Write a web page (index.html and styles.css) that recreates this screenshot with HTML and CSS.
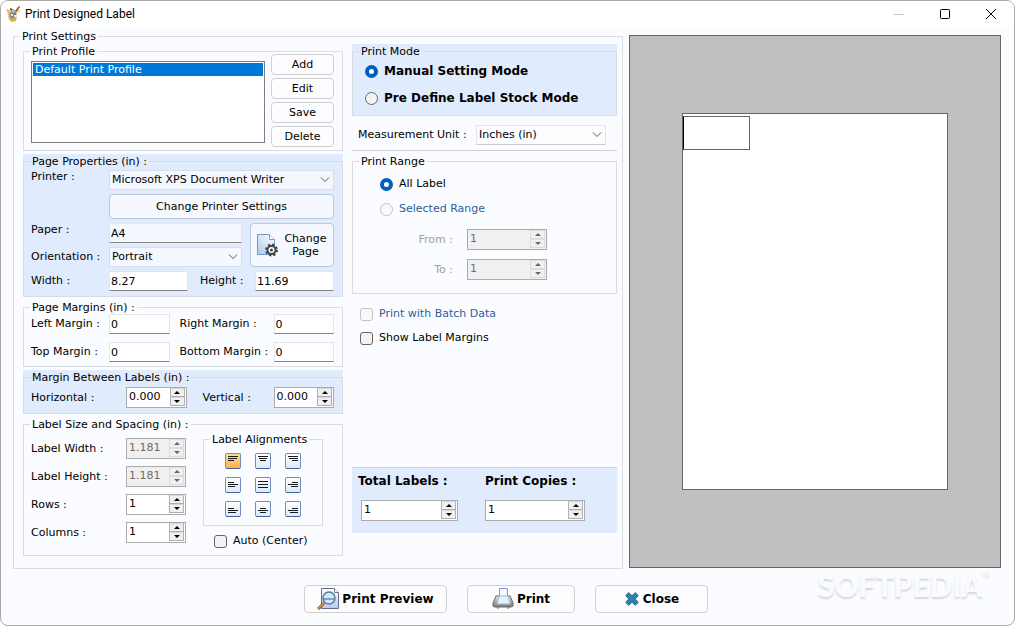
FILE: index.html
```html
<!DOCTYPE html>
<html lang="en">
<head>
    <meta charset="UTF-8">
    <meta name="viewport" content="width=device-width, initial-scale=1.0">
    <title>Print Designed Label</title>
    <link rel="stylesheet" href="styles.css">
</head>
<body>
    <div class="window">
        <header class="title-bar">
            <svg class="app-icon" width="16" height="16" viewBox="0 0 16 16">
                <path d="M3 5l9-1-1 9-7 1z" fill="#a9a9a4"/>
                <path d="M5 7l6-1v5l-5 1z" fill="#76808f"/>
                <path d="M1 3l4 1 1 3-3 1zM10 4l3-2 2 3-4 2z" fill="#efc252"/>
                <path d="M3 10l4 3 5-2-1 4-5 1z" fill="#e8ae3c"/>
                <path d="M5 2l3 1-1 2-2-1z" fill="#7b5a3a"/>
                <path d="M14 0l1 1-4 5-1-1z" fill="#8a4a35"/>
                <path d="M6 8h2v2H6zM9 9h2v2H9z" fill="#f4ead0"/>
                <path d="M8 3l2 1-1 3-2-1z" fill="#b9bfc9"/>
            </svg>
            <h1>Print Designed Label</h1>
            <div class="window-buttons">
                <button type="button" aria-label="Minimize" disabled>
                    <svg width="12" height="12" viewBox="0 0 12 12"><path d="M1 6.5h10" stroke="#c4c4c4"/></svg>
                </button>
                <button type="button" aria-label="Maximize">
                    <svg width="12" height="12" viewBox="0 0 12 12"><rect x="1.5" y="1.5" width="9" height="9" rx="1" fill="none" stroke="#000"/></svg>
                </button>
                <button type="button" aria-label="Close window">
                    <svg width="12" height="12" viewBox="0 0 12 12"><path d="M1 1l10 10M11 1L1 11" stroke="#000"/></svg>
                </button>
            </div>
        </header>

        <main class="content">
            <fieldset class="settings">
                <legend>Print Settings</legend>
                <div class="settings-columns">
                    <div class="column">
                        <div class="panel">
                            <fieldset>
                                <legend>Print Profile</legend>
                                <div class="profile">
                                    <select class="profile-list" size="4" aria-label="Print Profile">
                                        <option selected>Default Print Profile</option>
                                    </select>
                                    <div class="profile-buttons">
                                        <button type="button" class="btn">Add</button>
                                        <button type="button" class="btn">Edit</button>
                                        <button type="button" class="btn">Save</button>
                                        <button type="button" class="btn">Delete</button>
                                    </div>
                                </div>
                            </fieldset>
                        </div>

                        <div class="panel tinted">
                            <fieldset>
                                <legend>Page Properties (in) :</legend>
                                <div class="page-properties">
                                    <div class="row">
                                        <label class="label-high" for="printer">Printer :</label>
                                        <select id="printer" class="grow"><option>Microsoft XPS Document Writer</option></select>
                                    </div>
                                    <button type="button" class="btn printer-settings">Change Printer Settings</button>
                                    <div class="paper">
                                        <div class="paper-fields">
                                            <div class="row">
                                                <label class="label-high" for="paper">Paper :</label>
                                                <input type="text" id="paper" class="grow readonly" value="A4" readonly>
                                            </div>
                                            <div class="row">
                                                <label for="orientation">Orientation :</label>
                                                <select id="orientation" class="grow"><option>Portrait</option><option>Landscape</option></select>
                                            </div>
                                        </div>
                                        <button type="button" class="btn change-page">
                                            <svg width="22" height="24" viewBox="0 0 22 24">
                                                <defs>
                                                    <linearGradient id="sheet" x1="0" y1="1" x2="1" y2="0">
                                                        <stop offset="0" stop-color="#a9cbec"/>
                                                        <stop offset="1" stop-color="#ffffff"/>
                                                    </linearGradient>
                                                </defs>
                                                <path d="M.5 1.5h12l5 5v15H.5z" fill="url(#sheet)" stroke="#6f9cc4"/>
                                                <path d="M12.5 1.5v5h5" fill="#fff" stroke="#6f9cc4"/>
                                                <circle cx="14.5" cy="17" r="4" fill="#fff" stroke="#444" stroke-width="2"/>
                                                <circle cx="14.5" cy="17" r="5.5" fill="none" stroke="#444" stroke-width="2" stroke-dasharray="2.3 2.02"/>
                                                <circle cx="14.5" cy="17" r="1.5" fill="#444"/>
                                            </svg>
                                            <span>Change<br>Page</span>
                                        </button>
                                    </div>
                                    <div class="row">
                                        <label for="page-width">Width :</label>
                                        <input type="text" id="page-width" class="size-input" value="8.27">
                                        <label class="height-label" for="page-height">Height :</label>
                                        <input type="text" id="page-height" class="size-input" value="11.69">
                                    </div>
                                </div>
                            </fieldset>
                        </div>

                        <div class="panel">
                            <fieldset>
                                <legend>Page Margins (in) :</legend>
                                <div class="page-margins">
                                    <label for="margin-left">Left Margin :</label>
                                    <input type="text" id="margin-left" value="0">
                                    <label class="second" for="margin-right">Right Margin :</label>
                                    <input type="text" id="margin-right" value="0">
                                    <label for="margin-top">Top Margin :</label>
                                    <input type="text" id="margin-top" value="0">
                                    <label class="second" for="margin-bottom">Bottom Margin :</label>
                                    <input type="text" id="margin-bottom" value="0">
                                </div>
                            </fieldset>
                        </div>

                        <div class="panel tinted">
                            <fieldset>
                                <legend>Margin Between Labels (in) :</legend>
                                <div class="label-margins">
                                    <label for="horizontal">Horizontal :</label>
                                    <div class="spin">
                                        <input type="number" id="horizontal" value="0.000" step="0.001">
                                        <div class="spin-buttons"><button type="button" aria-label="Up"></button><button type="button" aria-label="Down"></button></div>
                                    </div>
                                    <label class="vertical-label" for="vertical">Vertical :</label>
                                    <div class="spin">
                                        <input type="number" id="vertical" value="0.000" step="0.001">
                                        <div class="spin-buttons"><button type="button" aria-label="Up"></button><button type="button" aria-label="Down"></button></div>
                                    </div>
                                </div>
                            </fieldset>
                        </div>

                        <div class="panel">
                            <fieldset>
                                <legend>Label Size and Spacing (in) :</legend>
                                <div class="label-size">
                                    <div class="label-fields">
                                        <label for="label-width">Label Width :</label>
                                        <div class="spin disabled">
                                            <input type="number" id="label-width" value="1.181" step="0.001" disabled>
                                            <div class="spin-buttons"><button type="button" aria-label="Up" disabled></button><button type="button" aria-label="Down" disabled></button></div>
                                        </div>
                                        <label for="label-height">Label Height :</label>
                                        <div class="spin disabled">
                                            <input type="number" id="label-height" value="1.181" step="0.001" disabled>
                                            <div class="spin-buttons"><button type="button" aria-label="Up" disabled></button><button type="button" aria-label="Down" disabled></button></div>
                                        </div>
                                        <label for="rows">Rows :</label>
                                        <div class="spin">
                                            <input type="number" id="rows" value="1">
                                            <div class="spin-buttons"><button type="button" aria-label="Up"></button><button type="button" aria-label="Down"></button></div>
                                        </div>
                                        <label for="columns">Columns :</label>
                                        <div class="spin">
                                            <input type="number" id="columns" value="1">
                                            <div class="spin-buttons"><button type="button" aria-label="Up"></button><button type="button" aria-label="Down"></button></div>
                                        </div>
                                    </div>
                                    <div class="alignments">
                                        <fieldset>
                                            <legend>Label Alignments</legend>
                                            <div class="align-grid">
                                                <button type="button" class="active" aria-label="Top left"><svg width="14" height="14"><path d="M2 2.5h10M2 4.5h9M2 6.5h6"/></svg></button>
                                                <button type="button" aria-label="Top center"><svg width="14" height="14"><path d="M2 2.5h10M3 4.5h8M4 6.5h6"/></svg></button>
                                                <button type="button" aria-label="Top right"><svg width="14" height="14"><path d="M2 2.5h10M3 4.5h9M6 6.5h6"/></svg></button>
                                                <button type="button" aria-label="Middle left"><svg width="14" height="14"><path d="M2 4.5h6M2 6.5h10M2 8.5h7"/></svg></button>
                                                <button type="button" aria-label="Middle center"><svg width="14" height="14"><path d="M2 3.5h10M2 6.5h10M2 9.5h10"/></svg></button>
                                                <button type="button" aria-label="Middle right"><svg width="14" height="14"><path d="M6 4.5h6M2 6.5h10M5 8.5h7"/></svg></button>
                                                <button type="button" aria-label="Bottom left"><svg width="14" height="14"><path d="M2 6.5h6M2 8.5h10M2 10.5h8"/></svg></button>
                                                <button type="button" aria-label="Bottom center"><svg width="14" height="14"><path d="M4 6.5h6M2 8.5h10M4 10.5h6"/></svg></button>
                                                <button type="button" aria-label="Bottom right"><svg width="14" height="14"><path d="M6 6.5h6M2 8.5h10M4 10.5h8"/></svg></button>
                                            </div>
                                        </fieldset>
                                        <label class="option auto-center"><input type="checkbox"> Auto (Center)</label>
                                    </div>
                                </div>
                            </fieldset>
                        </div>
                    </div>

                    <div class="column column-right">
                        <div class="panel tinted">
                            <fieldset>
                                <legend>Print Mode</legend>
                                <div class="print-mode">
                                    <label class="option"><input type="radio" name="mode" checked> Manual Setting Mode</label>
                                    <label class="option"><input type="radio" name="mode"> Pre Define Label Stock Mode</label>
                                </div>
                            </fieldset>
                        </div>

                        <div class="unit">
                            <label for="unit">Measurement Unit :</label>
                            <select id="unit"><option>Inches (in)</option></select>
                        </div>

                        <div class="panel">
                            <fieldset>
                                <legend>Print Range</legend>
                                <div class="print-range">
                                    <label class="option"><input type="radio" name="range" checked> All Label</label>
                                    <label class="option muted"><input type="radio" name="range" disabled> Selected Range</label>
                                    <div class="range-fields">
                                        <label for="from">From :</label>
                                        <div class="spin disabled">
                                            <input type="number" id="from" value="1" disabled>
                                            <div class="spin-buttons"><button type="button" aria-label="Up" disabled></button><button type="button" aria-label="Down" disabled></button></div>
                                        </div>
                                        <label for="to">To :</label>
                                        <div class="spin disabled">
                                            <input type="number" id="to" value="1" disabled>
                                            <div class="spin-buttons"><button type="button" aria-label="Up" disabled></button><button type="button" aria-label="Down" disabled></button></div>
                                        </div>
                                    </div>
                                </div>
                            </fieldset>
                        </div>

                        <div class="print-options">
                            <label class="option muted"><input type="checkbox" disabled> Print with Batch Data</label>
                            <label class="option"><input type="checkbox"> Show Label Margins</label>
                        </div>

                        <div class="totals">
                            <div class="total">
                                <label for="total-labels">Total Labels :</label>
                                <div class="spin total-spin">
                                    <input type="number" id="total-labels" value="1">
                                    <div class="spin-buttons"><button type="button" aria-label="Up"></button><button type="button" aria-label="Down"></button></div>
                                </div>
                            </div>
                            <div class="total">
                                <label for="copies">Print Copies :</label>
                                <div class="spin">
                                    <input type="number" id="copies" value="1">
                                    <div class="spin-buttons"><button type="button" aria-label="Up"></button><button type="button" aria-label="Down"></button></div>
                                </div>
                            </div>
                        </div>
                    </div>
                </div>
            </fieldset>

            <section class="preview">
                <div class="sheet">
                    <div class="sheet-label"></div>
                </div>
            </section>
        </main>

        <footer class="actions">
            <button type="button" class="btn action preview-btn">
                <svg width="22" height="22" viewBox="0 0 22 22">
                    <defs>
                        <linearGradient id="doc" x1="0" y1="0" x2="0" y2="1">
                            <stop offset="0" stop-color="#ffffff"/>
                            <stop offset="1" stop-color="#b9cbe8"/>
                        </linearGradient>
                    </defs>
                    <path d="M4.5 .5h13l4 4v16h-17z" fill="url(#doc)" stroke="#5f6f8c"/>
                    <path d="M17.5 .5v4h4" fill="#fff" stroke="#777"/>
                    <path d="M1 21l6-6" stroke="#8a5526" stroke-width="3"/>
                    <path d="M1 21l6-6" stroke="#d9954a" stroke-width="1.5"/>
                    <circle cx="12" cy="10" r="6" fill="#d5e8fa" stroke="#5b7aa0" stroke-width="1.5"/>
                    <path d="M7 10h10v2H7z" fill="#7ba3d3"/>
                </svg>
                Print Preview
            </button>
            <button type="button" class="btn action print-btn">
                <svg width="22" height="22" viewBox="0 0 22 22">
                    <defs>
                        <linearGradient id="body" x1="0" y1="0" x2="0" y2="1">
                            <stop offset="0" stop-color="#e8e8e8"/>
                            <stop offset="1" stop-color="#777777"/>
                        </linearGradient>
                    </defs>
                    <path d="M4 19h3v2H5zM15 19h3l-1 2h-2z" fill="#c8c2a8"/>
                    <path d="M4 8h14l3 7v3l-2 1H3l-2-1v-3z" fill="url(#body)" stroke="#666"/>
                    <path d="M7.5 .5h8v9h-8z" fill="#f4f9ff" stroke="#7f93cf"/>
                    <path d="M7 8h9l2 8H5z" fill="#e4f2ff" stroke="#aab4c4"/>
                </svg>
                Print
            </button>
            <button type="button" class="btn action close-btn">
                <svg width="16" height="16" viewBox="0 0 16 16">
                    <path d="M3 3l10 10M13 3L3 13" stroke="#1e5670" stroke-width="5"/>
                    <path d="M3 3l10 10M13 3L3 13" stroke="#2c83a8" stroke-width="4"/>
                </svg>
                Close
            </button>
        </footer>
        <div class="watermark">SOFTPEDIA<sup>®</sup></div>
    </div>
</body>
</html>
```

FILE: styles.css
```css
* {
    box-sizing: border-box;
}

body {
    margin: 0;
    background: #fff;
    color: #000;
    font-family: Verdana, "DejaVu Sans", sans-serif;
    font-size: 11px;
    line-height: 14px;
}

button,
input,
select {
    font: inherit;
    color: inherit;
    margin: 0;
}

svg {
    display: block;
    flex: none;
}

.window {
    position: relative;
    display: flex;
    flex-direction: column;
    min-height: 100vh;
    border: 1px solid #a9a9a9;
    border-radius: 8px;
    background: #fbfcff;
    overflow: hidden;
}

/* title bar */
.title-bar {
    display: flex;
    align-items: center;
    height: 25px;
    padding-left: 4px;
    background: #fff;
}

.title-bar h1 {
    flex: 1;
    margin: 0 0 0 4px;
    font-family: "Segoe UI", Roboto, sans-serif;
    font-size: 12px;
    font-weight: normal;
}

.window-buttons {
    display: flex;
}

.window-buttons button {
    display: flex;
    align-items: center;
    justify-content: center;
    width: 46px;
    height: 24px;
    padding: 0;
    border: none;
    background: none;
}

/* main area */
.content {
    display: flex;
    gap: 6px;
    flex: 1;
    padding: 8px 13px 0 12px;
}

fieldset {
    min-width: 0;
    margin: 0;
    padding: 0;
    border: 1px solid #dadce0;
}

/* short line box keeps the rows close to the border */
legend {
    margin-left: 6px;
    padding: 0 2px;
    line-height: 5px;
}

.settings {
    flex: 0 1 610px;
}

.settings-columns {
    display: grid;
    grid-template-columns: minmax(0, 320fr) minmax(0, 265fr);
    gap: 9px;
    padding: 5px 5px 12px 9px;
}

.column {
    display: flex;
    flex-direction: column;
    gap: 3px;
}

.panel {
    padding-top: 5px;
}

.tinted {
    background: #e0ebfd;
}

/* controls */
input[type="text"],
select {
    height: 20px;
    min-width: 0;
    padding: 0 1px;
    border: 1px solid #e2e5ea;
    border-radius: 0;
    background-color: #fff;
}

input[type="text"] {
    border-bottom-color: #868686;
}

input.readonly {
    background: #f5f9ff;
}

select {
    appearance: none;
    padding: 0 20px 0 2px;
    background: #fdfdff url("data:image/svg+xml,%3Csvg xmlns='http://www.w3.org/2000/svg' width='10' height='6'%3E%3Cpath d='M1 .5l4 4 4-4' fill='none' stroke='%23555'/%3E%3C/svg%3E") no-repeat right 3px center;
    border-bottom-color: #ccc;
}

.tinted select {
    background-color: #f5f9ff;
    border-color: #d3dfef;
}

.btn {
    padding: 0;
    border: 1px solid #d0d0d3;
    border-radius: 4px;
    background: #fdfdff;
}

.tinted .btn {
    background: #f5f9ff;
    border-color: #bcc6d6;
}

.grow {
    flex: 1;
}

.row {
    display: flex;
    align-items: center;
}

.row label:first-child {
    width: 78px;
}

.row .label-high {
    align-self: flex-start;
}

.option {
    display: flex;
    align-items: center;
    gap: 6px;
}

.muted {
    color: #2c5d9b;
}

input[type="radio"],
input[type="checkbox"] {
    appearance: none;
    flex: none;
    width: 13px;
    height: 13px;
    border: 1px solid #666;
    border-radius: 3px;
    background: #f3f3f3;
}

input[type="radio"] {
    border-radius: 50%;
}

input[type="radio"]:checked {
    border: 4px solid #005fb8;
    background: #fff;
}

input[type="radio"]:disabled,
input[type="checkbox"]:disabled {
    border-color: #c3c3c3;
    background: #f9f9f9;
}

.spin {
    display: flex;
    height: 21px;
    padding: 0 1px 0 0;
    border: 1px solid #ababab;
    background: #fff;
}

.spin input {
    flex: 1;
    width: 0;
    padding: 0 0 2px 2px;
    border: none;
    outline: none;
    background: none;
    appearance: textfield;
}

.spin input::-webkit-inner-spin-button {
    appearance: none;
    margin: 0;
}

.spin-buttons {
    display: flex;
    flex-direction: column;
    width: 15px;
}

.spin-buttons button {
    display: flex;
    align-items: center;
    justify-content: center;
    height: 9px;
    padding: 0;
    border: 1px solid #b0b0b0;
    border-top-color: #d8d8d8;
    background: #f0f0f0;
}

.spin-buttons button::before {
    content: "";
    border: 3px solid transparent;
    border-top: none;
    border-bottom: 3px solid #000;
}

.spin-buttons button:last-child::before {
    border-top: 3px solid #000;
    border-bottom: none;
}

.spin.disabled {
    background: #f0f0f0;
}

.disabled input {
    color: #6d6d6d;
}

.disabled .spin-buttons button {
    border-color: #dcdcdc;
}

.disabled .spin-buttons button::before {
    border-bottom-color: #666;
}

.disabled .spin-buttons button:last-child::before {
    border-top-color: #666;
}

/* print profile */
.profile {
    display: flex;
    gap: 6px;
    padding: 0 8px 3px 7px;
}

.profile-list {
    flex: 1;
    height: 82px;
    margin-top: 7px;
    padding: 1px;
    border: 1px solid #7a7f87;
    background: #fff;
    overflow: hidden;
}

.profile-list option {
    min-height: 13px;
    padding: 0 2px;
    line-height: 13px;
}

.profile-list option:checked {
    background: #0078d7 linear-gradient(#0078d7, #0078d7);
    color: #fff;
}

.profile-buttons {
    display: flex;
    flex-direction: column;
    gap: 3px;
    width: 63px;
}

.profile-buttons .btn {
    height: 21px;
}

/* page properties */
.page-properties {
    display: flex;
    flex-direction: column;
    gap: 4px;
    padding: 6px 8px 5px 7px;
}

.printer-settings {
    height: 25px;
    margin-left: 78px;
}

.paper {
    display: flex;
    gap: 8px;
}

.paper-fields {
    display: flex;
    flex: 1;
    flex-direction: column;
    gap: 4px;
    min-width: 0;
}

.change-page {
    display: flex;
    align-items: center;
    justify-content: center;
    gap: 5px;
    width: 84px;
    line-height: 13px;
}

.size-input {
    flex: 1;
}

.height-label {
    width: 55px;
    margin-left: 12px;
}

/* page margins */
.page-margins {
    display: grid;
    grid-template-columns: 78px 1fr 104px 1fr;
    row-gap: 8px;
    align-items: center;
    padding: 4px 8px 4px 7px;
}

.second {
    padding-left: 10px;
}

.label-margins {
    display: grid;
    grid-template-columns: 95px 1fr 87px 1fr;
    align-items: center;
    padding: 7px 8px 5px 7px;
}

.vertical-label {
    padding-left: 16px;
}

/* label size and alignment */
.label-size {
    display: flex;
    align-items: flex-start;
    gap: 17px;
    padding: 10px 19px 7px 7px;
}

.label-fields {
    display: grid;
    flex: 1;
    grid-template-columns: 95px 1fr;
    row-gap: 7px;
    align-items: center;
    padding-top: 1px;
}

.alignments {
    width: 120px;
}

.align-grid {
    display: grid;
    grid-template-columns: repeat(3, 16px);
    justify-content: center;
    gap: 8px 14px;
    padding: 11px 0 8px;
}

.align-grid button {
    width: 16px;
    height: 16px;
    padding: 0;
    border: 1px solid #6f8cc4;
    border-bottom-color: #4a5f94;
    border-radius: 2px;
    background: linear-gradient(#fff, #d8ebfc);
}

.align-grid .active {
    background: linear-gradient(#ffdf94, #ffb04a);
}

.align-grid path {
    stroke: #1a1a1a;
}

.auto-center {
    padding: 8px 0 0 11px;
}

/* right column */
.column-right {
    padding-bottom: 23px;
}

.print-mode {
    display: flex;
    flex-direction: column;
    gap: 13px;
    padding: 10px 12px;
    font-size: 12px;
    font-weight: bold;
}

.unit {
    display: flex;
    align-items: center;
    justify-content: space-between;
    padding: 6px 11px 5px 6px;
    border-bottom: 1px solid #cfd1d4;
}

.unit select {
    width: 130px;
}

.print-range {
    display: flex;
    flex-direction: column;
    gap: 11px;
    padding: 13px 27px;
}

.range-fields {
    display: grid;
    grid-template-columns: 73px 80px;
    gap: 9px 14px;
    align-items: center;
    padding-top: 2px;
    color: #a0a0a0;
    text-align: right;
}

.print-options {
    display: flex;
    flex-direction: column;
    gap: 10px;
    padding: 10px 8px;
}

.totals {
    display: flex;
    gap: 27px;
    margin-top: auto;
    padding: 6px 6px 12px;
    border-top: 1px solid #cfd1d4;
    background: #e0ebfd;
}

.total {
    display: flex;
    flex-direction: column;
    gap: 12px;
    width: 100px;
}

.total label {
    font-size: 12px;
    font-weight: bold;
}

.total-spin {
    margin-left: 3px;
}

/* sheet preview */
.preview {
    display: flex;
    flex: 1;
    align-items: center;
    justify-content: center;
    margin: 1px 0;
    border: 1px solid #666;
    background: #c0c0c0;
}

.sheet {
    width: 72%;
    aspect-ratio: 266 / 376;
    padding-top: 2px;
    border: 1px solid #666;
    background: #fff;
}

.sheet-label {
    width: 67px;
    height: 34px;
    border: 1px solid #666;
    border-left-color: #000;
}

/* bottom buttons */
.actions {
    display: flex;
    justify-content: center;
    gap: 20px;
    padding: 16px 3px 12px 0;
}

.action {
    display: flex;
    align-items: center;
    justify-content: center;
    gap: 3px;
    height: 28px;
    font-size: 12px;
    font-weight: bold;
}

.preview-btn {
    width: 143px;
}

.print-btn {
    width: 108px;
}

.close-btn {
    width: 113px;
}

.watermark {
    position: absolute;
    right: 24px;
    bottom: 24px;
    color: #fafbfd;
    font-family: Lato, sans-serif;
    font-size: 30px;
    font-weight: 900;
    line-height: 32px;
    text-shadow: 0 2px 2px rgba(0, 0, 0, 0.15);
}

.watermark sup {
    font-size: 9px;
    line-height: 9px;
    vertical-align: top;
}
```
